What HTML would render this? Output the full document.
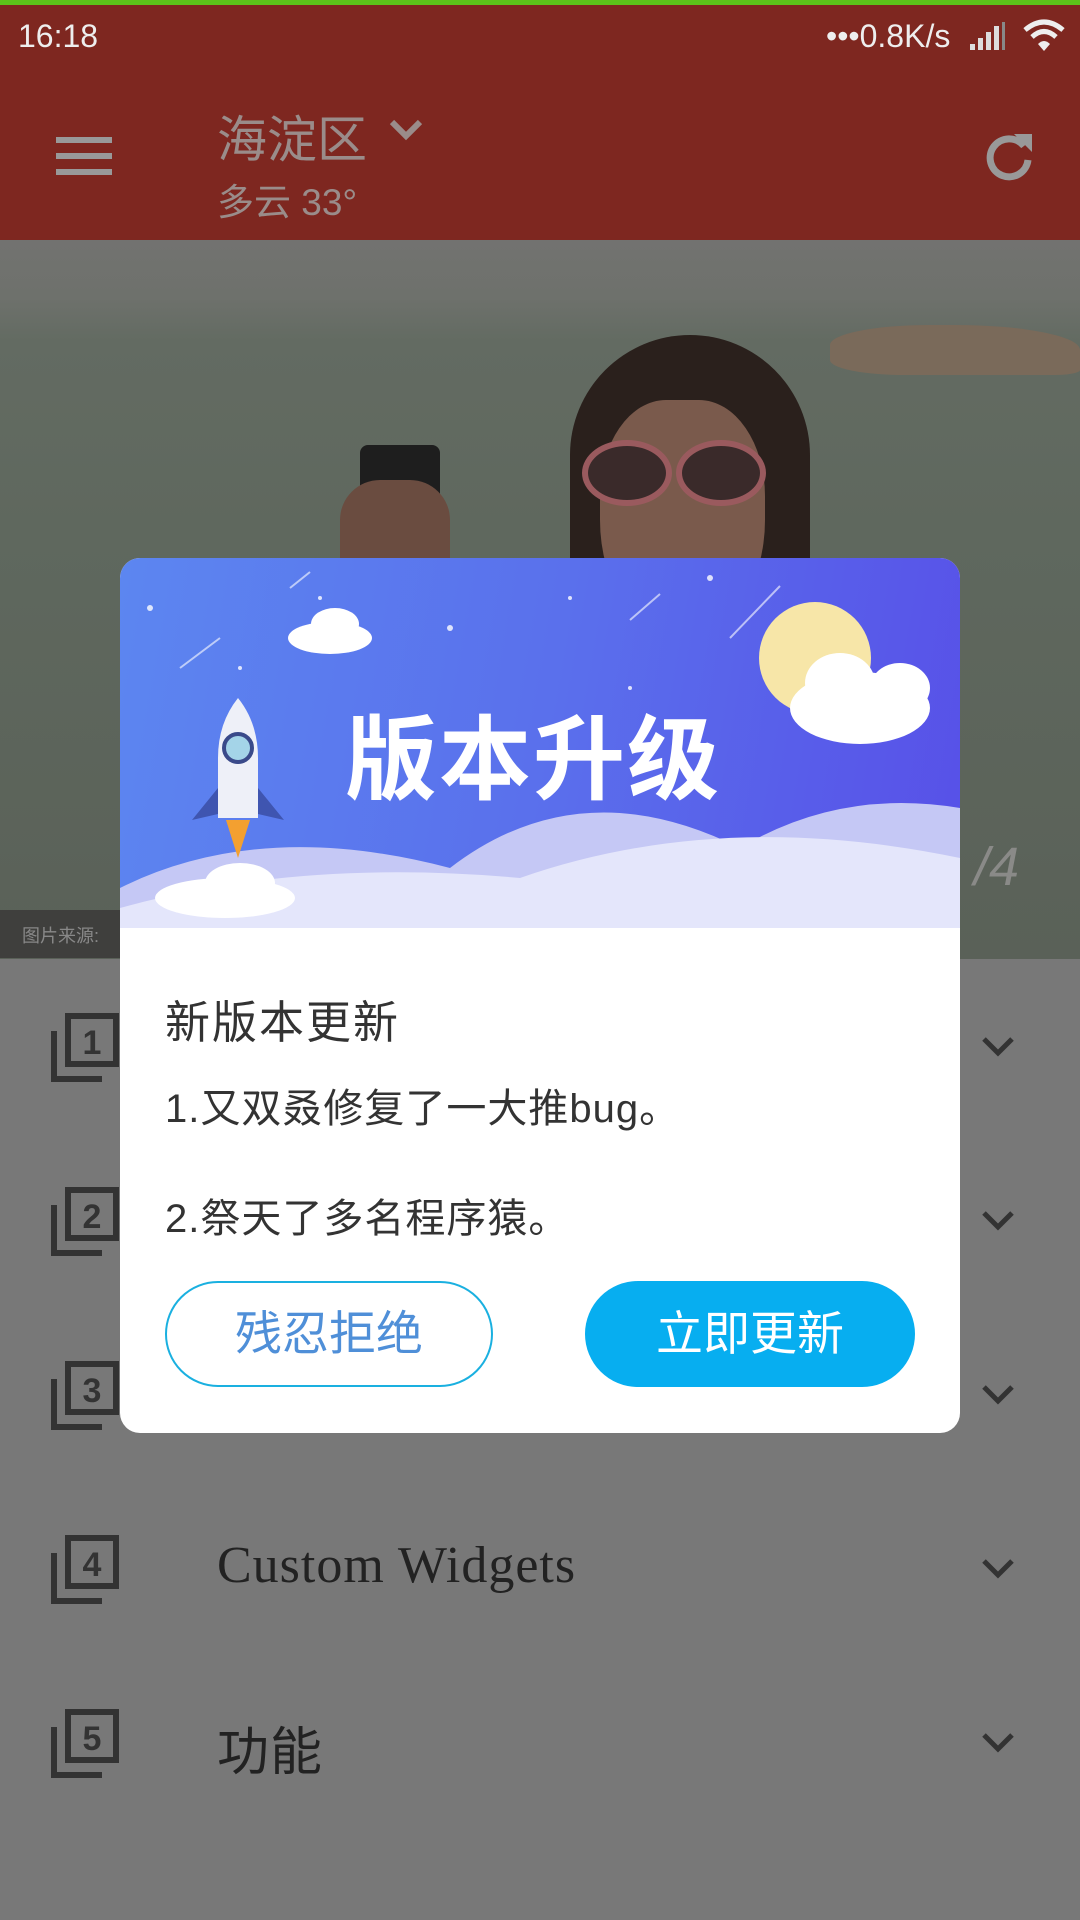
<!DOCTYPE html>
<html><head><meta charset="utf-8">
<style>
*{margin:0;padding:0;box-sizing:border-box}
body{width:1080px;height:1920px;overflow:hidden;position:relative;background:#777;font-family:"Liberation Sans","Noto Sans CJK SC",sans-serif}
.abs{position:absolute}
</style></head><body>
<div class="abs" style="left:0;top:0;width:1080px;height:240px;background:#7e2720"></div>
<div class="abs" style="left:0;top:0;width:1080px;height:5px;background:#5cc21a"></div>
<div class="abs" style="left:18px;top:18px;font-size:32px;color:#eee">16:18</div>
<div class="abs" style="left:826px;top:18px;font-size:32px;color:#eee">•••0.8K/s</div>
<svg class="abs" style="left:968px;top:22px" width="40" height="30"><rect x="2" y="22" width="5" height="6" fill="#ddd"/><rect x="10" y="16" width="5" height="12" fill="#ddd"/><rect x="18" y="10" width="5" height="18" fill="#ddd"/><rect x="26" y="4" width="5" height="24" fill="#ddd"/><rect x="34" y="0" width="3" height="28" fill="#888"/></svg>
<svg class="abs" style="left:1022px;top:18px" width="44" height="36" viewBox="0 0 44 36"><path d="M3 12 Q22 -4 41 12" stroke="#eee" stroke-width="5" fill="none"/><path d="M10 19 Q22 8 34 19" stroke="#eee" stroke-width="5" fill="none"/><path d="M16 26 Q22 20 28 26 L22 33Z" fill="#eee"/></svg>
<svg class="abs" style="left:56px;top:137px" width="56" height="38"><rect y="0" width="56" height="6" fill="#999"/><rect y="16" width="56" height="6" fill="#999"/><rect y="32" width="56" height="6" fill="#999"/></svg>
<div class="abs" style="left:217px;top:100px;font-size:50px;color:#9a8c8a">海淀区</div>
<svg class="abs" style="left:388px;top:118px" width="36" height="24"><path d="M4 4 L18 18 L32 4" stroke="#9a8c8a" stroke-width="6" fill="none"/></svg>
<div class="abs" style="left:217px;top:172px;font-size:37px;color:#9a8c8a">多云 33°</div>
<svg class="abs" style="left:984px;top:130px" width="52" height="52" viewBox="0 0 52 52"><path d="M40 16 A19 19 0 1 0 44 30" stroke="#999" stroke-width="7" fill="none"/><path d="M30 4 L48 4 L48 22Z" fill="#999"/></svg>
<div class="abs" style="left:0;top:240px;width:1080px;height:719px;background:linear-gradient(#727270 0%,#6e716c 8%,#636b62 14%,#5f685e 40%,#5a6158 100%)"></div>
<div class="abs" style="left:830px;top:325px;width:250px;height:50px;background:#7a6a5a;border-radius:40% 50% 10% 30%"></div>
<div class="abs" style="left:570px;top:335px;width:240px;height:640px;background:#2a201c;border-radius:120px 120px 0 0"></div>
<div class="abs" style="left:600px;top:400px;width:165px;height:240px;background:#7a5a4c;border-radius:40% 40% 50% 50%"></div>
<div class="abs" style="left:582px;top:440px;width:90px;height:66px;border:6px solid #9a5a5e;border-radius:50%;background:#3a2a2a"></div>
<div class="abs" style="left:676px;top:440px;width:90px;height:66px;border:6px solid #9a5a5e;border-radius:50%;background:#3a2a2a"></div>
<div class="abs" style="left:360px;top:445px;width:80px;height:120px;background:#1e1e1e;border-radius:8px"></div>
<div class="abs" style="left:340px;top:480px;width:110px;height:180px;background:#6a4c40;border-radius:40px"></div>
<div class="abs" style="left:0;top:910px;width:120px;height:48px;background:#3f3f3d;color:#888;font-size:18px;padding:12px 0 0 22px">图片来源:</div>
<div class="abs" style="left:974px;top:836px;font-size:54px;color:#8a8a88;font-style:italic">/4</div>
<div class="abs" style="left:0;top:959px;width:1080px;height:961px;background:#787878"></div>
<div id="list"></div>
<div class="abs" style="left:120px;top:558px;width:840px;height:875px;background:#fff;border-radius:20px;overflow:hidden">
 <div class="abs" style="left:0;top:0;width:840px;height:370px;background:linear-gradient(100deg,#5c86f0 0%,#5a70ec 50%,#5750e8 100%)"></div>
 <svg class="abs" style="left:0;top:0" width="840" height="370">
  <g fill="#fff" opacity=".8"><circle cx="30" cy="50" r="3"/><circle cx="120" cy="110" r="2"/><circle cx="330" cy="70" r="3"/><circle cx="450" cy="40" r="2"/><circle cx="590" cy="20" r="3"/><circle cx="725" cy="70" r="4"/><circle cx="780" cy="120" r="2"/><circle cx="510" cy="130" r="2"/><circle cx="200" cy="40" r="2"/></g>
  <g stroke="#fff" stroke-width="2" opacity=".6"><line x1="60" y1="110" x2="100" y2="80"/><line x1="510" y1="62" x2="540" y2="36"/><line x1="610" y1="80" x2="660" y2="28"/><line x1="170" y1="30" x2="190" y2="14"/></g>
  <circle cx="695" cy="100" r="56" fill="#f7e6a8"/>
  <g fill="#fff"><ellipse cx="740" cy="150" rx="70" ry="36"/><ellipse cx="720" cy="125" rx="35" ry="30"/><ellipse cx="780" cy="130" rx="30" ry="25"/></g>
  <g fill="#fff"><ellipse cx="210" cy="80" rx="42" ry="16"/><ellipse cx="215" cy="66" rx="24" ry="16"/></g>
  <path d="M0 330 Q140 260 330 310 Q460 210 620 290 Q720 230 840 250 L840 370 L0 370Z" fill="#c5c8f5"/>
  <path d="M0 350 Q180 300 400 320 Q600 250 840 300 L840 370 L0 370Z" fill="#e4e6fb"/>
  <g fill="#fff"><ellipse cx="105" cy="340" rx="70" ry="20"/><ellipse cx="120" cy="325" rx="35" ry="20"/></g>
  <path d="M118 140 Q98 165 98 200 L98 260 L138 260 L138 200 Q138 165 118 140Z" fill="#eef0f8"/>
  <circle cx="118" cy="190" r="14" fill="#a4d4e8" stroke="#3a4a8a" stroke-width="4"/>
  <path d="M98 230 L72 262 L98 256Z M138 230 L164 262 L138 256Z" fill="#3f55b0"/>
  <path d="M106 262 L118 300 L130 262Z" fill="#f3a030"/>
 </svg>
 <div class="abs" style="left:225px;top:128px;font-size:92px;font-weight:bold;color:#fff;letter-spacing:2px">版本升级</div>
 <div class="abs" style="left:45px;top:428px;font-size:45px;color:#333;letter-spacing:2px">新版本更新</div>
 <div class="abs" style="left:45px;top:518px;font-size:40px;color:#333;letter-spacing:1px">1.又双叒修复了一大推bug。</div>
 <div class="abs" style="left:45px;top:628px;font-size:40px;color:#333;letter-spacing:1px">2.祭天了多名程序猿。</div>
 <div class="abs" style="left:45px;top:723px;width:328px;height:106px;border:2px solid #1ab0e0;border-radius:53px;color:#4f8fd8;font-size:47px;text-align:center;line-height:102px">残忍拒绝</div>
 <div class="abs" style="left:465px;top:723px;width:330px;height:106px;background:#07aef0;border-radius:53px;color:#fff;font-size:47px;text-align:center;line-height:106px">立即更新</div>
</div>
<script>
var items=["","","","Custom Widgets","功能"],h="";
for(var i=0;i<5;i++){var y=1047+i*174;
h+='<svg class="abs" style="left:50px;top:'+(y-34)+'px" width="70" height="70" viewBox="0 0 70 70"><rect x="18" y="3" width="48" height="48" fill="none" stroke="#333" stroke-width="6"/><path d="M4 18 L4 66 L52 66" fill="none" stroke="#333" stroke-width="6"/><text x="42" y="41" font-size="34" font-weight="bold" text-anchor="middle" fill="#333" font-family="Liberation Sans">'+(i+1)+'</text></svg>';
if(items[i])h+='<div class="abs" style="left:217px;top:'+(y-33)+'px;font-size:52px;letter-spacing:1px;color:#222;font-family:\'Liberation Serif\',\'Noto Sans CJK SC\',serif">'+items[i]+'</div>';
h+='<svg class="abs" style="left:980px;top:'+(y-12)+'px" width="36" height="24"><path d="M4 4 L18 18 L32 4" stroke="#333" stroke-width="5" fill="none"/></svg>';}
document.getElementById("list").innerHTML=h;
</script>
</body></html>
